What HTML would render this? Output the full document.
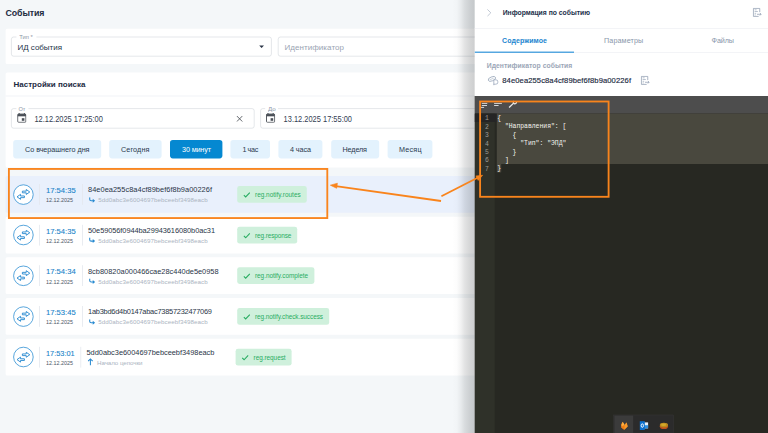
<!DOCTYPE html>
<html lang="ru">
<head>
<meta charset="utf-8">
<title>События</title>
<style>
html,body{margin:0;padding:0;}
body{width:768px;height:433px;overflow:hidden;background:#f4f7f9;font-family:"Liberation Sans",sans-serif;}
#s{position:absolute;left:0;top:0;width:1920px;height:1083px;transform:scale(0.4);transform-origin:0 0;background:#f4f7f9;overflow:hidden;color:#1d2b3f;}
#s *{box-sizing:border-box;}
.a{position:absolute;}
.t{position:absolute;white-space:nowrap;line-height:1;}
.b{font-weight:bold;}
.card{position:absolute;background:#fff;border-radius:4px;}
.fld{position:absolute;border:1.5px solid #bcc2cb;border-radius:6px;background:#fff;}
.gap{position:absolute;top:-3px;height:6px;background:#fff;}
.btn{position:absolute;top:350px;height:46px;border-radius:7px;background:#e3f2fd;}
.btn.on{background:#0588d1;}
.row{position:absolute;left:14px;width:1200px;height:92px;background:#fff;border-radius:4px;}
.row.sel{background:#e9f0fc;}
.circ{position:absolute;left:18.5px;top:20.5px;width:51px;height:51px;border-radius:50%;border:2px solid #2e8fd3;background:#fff;}
.vd{position:absolute;top:20px;width:1.5px;height:52px;background:#e4e8ee;}
.bdg{position:absolute;top:25px;height:42px;border-radius:6px;background:#cff0dc;}
pre{margin:0;font-family:"Liberation Mono",monospace;}
</style>
</head>
<body>
<div id="s">

<div class="t b" style="left:13.75px;top:21.38px;font-size:22px;color:#1d2b3f;letter-spacing:-0.224px;">События</div>
<div class="card" style="left:14px;top:71.5px;width:1200px;height:88.5px;"></div>
<div class="fld" style="left:28px;top:91.5px;width:651px;height:49px;"><div class="gap" style="left:12px;width:50px;"></div><div class="a" style="left:619px;top:21.5px;width:0;height:0;border-left:6.5px solid transparent;border-right:6.5px solid transparent;border-top:6.5px solid #2a3547;"></div></div>
<div class="t" style="left:47.50px;top:83.88px;font-size:15.5px;color:#8b95a5;transform:scaleX(0.9326);transform-origin:0 0;">Тип *</div>
<div class="t" style="left:43.75px;top:107.32px;font-size:20px;color:#26344a;letter-spacing:-0.064px;">ИД события</div>
<div class="fld" style="left:695px;top:91.5px;width:520px;height:49px;"></div>
<div class="t" style="left:711.25px;top:107.32px;font-size:20px;color:#9aa4b3;letter-spacing:0.126px;">Идентификатор</div>
<div class="card" style="left:14px;top:181px;width:1200px;height:238px;"></div>
<div class="t b" style="left:33.75px;top:200.57px;font-size:20px;color:#1d2b3f;letter-spacing:0.005px;">Настройки поиска</div>
<div class="a" style="left:14px;top:239px;width:1200px;height:1.5px;background:#eef1f4;"></div>
<div class="fld" style="left:28px;top:271px;width:608px;height:50px;"><div class="gap" style="left:12px;width:30px;"></div></div>
<svg class="a" style="left:42.5px;top:282px;" width="23" height="25" viewBox="0 0 23 25"><path d="M5 0.5v3M18 0.5v3" stroke="#4a4f57" stroke-width="2.4" fill="none"/><rect x="1.2" y="3.2" width="20.6" height="20.6" rx="2.4" fill="none" stroke="#4a4f57" stroke-width="2.4"/><rect x="1.2" y="3.2" width="20.6" height="5.6" fill="#4a4f57"/><rect x="11.5" y="13.5" width="6.5" height="6.5" fill="#4a4f57"/></svg>
<div class="t" style="left:46.25px;top:264.38px;font-size:15.5px;color:#8b95a5;transform:scaleX(0.9135);transform-origin:0 0;">От</div>
<div class="t" style="left:86.25px;top:286.65px;font-size:20.5px;color:#334053;transform:scaleX(0.9105);transform-origin:0 0;">12.12.2025 17:25:00</div>
<svg class="a" style="left:591px;top:289px;" width="16" height="16" viewBox="0 0 16 16"><path d="M1 1L15 15M15 1L1 15" stroke="#474c54" stroke-width="2.1" fill="none"/></svg>
<div class="fld" style="left:651px;top:271px;width:565px;height:50px;"><div class="gap" style="left:11px;width:32px;"></div></div>
<svg class="a" style="left:664.5px;top:282px;" width="23" height="25" viewBox="0 0 23 25"><path d="M5 0.5v3M18 0.5v3" stroke="#4a4f57" stroke-width="2.4" fill="none"/><rect x="1.2" y="3.2" width="20.6" height="20.6" rx="2.4" fill="none" stroke="#4a4f57" stroke-width="2.4"/><rect x="1.2" y="3.2" width="20.6" height="5.6" fill="#4a4f57"/><rect x="11.5" y="13.5" width="6.5" height="6.5" fill="#4a4f57"/></svg>
<div class="t" style="left:669.50px;top:264.38px;font-size:15.5px;color:#8b95a5;transform:scaleX(0.9976);transform-origin:0 0;">До</div>
<div class="t" style="left:709.00px;top:286.65px;font-size:20.5px;color:#334053;transform:scaleX(0.9091);transform-origin:0 0;">13.12.2025 17:55:00</div>
<div class="btn" style="left:32.5px;width:220px;"></div>
<div class="t" style="left:62.50px;top:365.26px;font-size:18px;color:#2a394e;letter-spacing:-0.044px;">Со вчерашнего дня</div>
<div class="btn" style="left:272.5px;width:131.25px;"></div>
<div class="t" style="left:302.50px;top:365.26px;font-size:18px;color:#2a394e;letter-spacing:0.375px;">Сегодня</div>
<div class="btn on" style="left:425px;width:131.25px;"></div>
<div class="t" style="left:455.00px;top:365.26px;font-size:18px;color:#fff;letter-spacing:-0.306px;">30 минут</div>
<div class="btn" style="left:576.25px;width:98.75px;"></div>
<div class="t" style="left:606.50px;top:365.26px;font-size:18px;color:#2a394e;word-spacing:-1.5px;letter-spacing:-0.602px;">1 час</div>
<div class="btn" style="left:696.25px;width:110px;"></div>
<div class="t" style="left:725.00px;top:365.26px;font-size:18px;color:#2a394e;letter-spacing:-0.184px;">4 часа</div>
<div class="btn" style="left:827.5px;width:120px;"></div>
<div class="t" style="left:856.25px;top:365.26px;font-size:18px;color:#2a394e;letter-spacing:-0.306px;">Неделя</div>
<div class="btn" style="left:968.75px;width:112.5px;"></div>
<div class="t" style="left:997.50px;top:365.26px;font-size:18px;color:#2a394e;letter-spacing:0.496px;">Месяц</div>
<div class="row sel" style="top:440px;">
<div class="circ"></div><svg class="a" style="left:0;top:0;" width="92" height="92" viewBox="0 0 92 92" fill="none" stroke="#2789d0" stroke-width="2.3" stroke-linejoin="round"><path d="M41.97 37.86L51.65 37.86L51.65 33.79L60.45 39.95L51.65 46.11L51.65 42.04L41.97 42.04Z"/><path d="M47.03 49.96L37.35 49.96L37.35 45.89L28.55 52.05L37.35 58.21L37.35 54.14L47.03 54.14Z"/></svg>
<div class="vd" style="left:84px;"></div>
<div class="t" style="left:101.00px;top:25.57px;font-size:20px;color:#1782c9;transform:scaleX(0.9536);transform-origin:0 0;-webkit-text-stroke:.25px #1782c9;">17:54:35</div>
<div class="t" style="left:101.00px;top:52.92px;font-size:15.6px;color:#4d5766;transform:scaleX(0.8649);transform-origin:0 0;">12.12.2025</div>
<div class="vd" style="left:191.25px;"></div>
<div class="t" style="left:206.00px;top:25.21px;font-size:18.5px;color:#2a3648;letter-spacing:0.110px;">84e0ea255c8a4cf89bef6f8b9a00226f</div>
<svg class="a" style="left:208px;top:52.5px;" width="17" height="15" viewBox="0 0 17 15" fill="none" stroke="#2789d0" stroke-width="2.7"><path d="M2.3 0v5.200q0 3.600 3.600 3.600h5" /><path d="M9.800 3.800l6 5-6 5z" fill="#2789d0" stroke="none"/></svg>
<div class="t" style="left:231.75px;top:52.75px;font-size:15.5px;color:#abb4c1;letter-spacing:0.147px;">5dd0abc3e6004697bebceebf3498eacb</div>
<div class="bdg" style="left:578.5px;width:174.25px;"><svg class="a" style="left:15px;top:14px;" width="18" height="16" viewBox="0 0 18 16" fill="none" stroke="#29ad62" stroke-width="2.800"><path d="M1.5 8.7l4.7 4.7L16.5 2.5"/></svg></div>
<div class="t" style="left:623.50px;top:39.46px;font-size:16px;color:#29ad62;letter-spacing:0.044px;">reg.notify.routes</div>
</div>
<div class="row" style="top:541.7px;">
<div class="circ"></div><svg class="a" style="left:0;top:0;" width="92" height="92" viewBox="0 0 92 92" fill="none" stroke="#2789d0" stroke-width="2.3" stroke-linejoin="round"><path d="M41.97 37.86L51.65 37.86L51.65 33.79L60.45 39.95L51.65 46.11L51.65 42.04L41.97 42.04Z"/><path d="M47.03 49.96L37.35 49.96L37.35 45.89L28.55 52.05L37.35 58.21L37.35 54.14L47.03 54.14Z"/></svg>
<div class="vd" style="left:84px;"></div>
<div class="t" style="left:101.00px;top:25.57px;font-size:20px;color:#1782c9;transform:scaleX(0.9536);transform-origin:0 0;-webkit-text-stroke:.25px #1782c9;">17:54:35</div>
<div class="t" style="left:101.00px;top:52.92px;font-size:15.6px;color:#4d5766;transform:scaleX(0.8649);transform-origin:0 0;">12.12.2025</div>
<div class="vd" style="left:191.25px;"></div>
<div class="t" style="left:206.00px;top:25.21px;font-size:18.5px;color:#2a3648;letter-spacing:-0.179px;">50e59056f0944ba29943616080b0ac31</div>
<svg class="a" style="left:208px;top:52.5px;" width="17" height="15" viewBox="0 0 17 15" fill="none" stroke="#2789d0" stroke-width="2.7"><path d="M2.3 0v5.200q0 3.600 3.600 3.600h5" /><path d="M9.800 3.800l6 5-6 5z" fill="#2789d0" stroke="none"/></svg>
<div class="t" style="left:231.75px;top:52.75px;font-size:15.5px;color:#abb4c1;letter-spacing:0.147px;">5dd0abc3e6004697bebceebf3498eacb</div>
<div class="bdg" style="left:578.5px;width:150px;"><svg class="a" style="left:15px;top:14px;" width="18" height="16" viewBox="0 0 18 16" fill="none" stroke="#29ad62" stroke-width="2.800"><path d="M1.5 8.7l4.7 4.7L16.5 2.5"/></svg></div>
<div class="t" style="left:623.50px;top:39.46px;font-size:16px;color:#29ad62;letter-spacing:-0.240px;">reg.response</div>
</div>
<div class="row" style="top:643.4px;">
<div class="circ"></div><svg class="a" style="left:0;top:0;" width="92" height="92" viewBox="0 0 92 92" fill="none" stroke="#2789d0" stroke-width="2.3" stroke-linejoin="round"><path d="M41.97 37.86L51.65 37.86L51.65 33.79L60.45 39.95L51.65 46.11L51.65 42.04L41.97 42.04Z"/><path d="M47.03 49.96L37.35 49.96L37.35 45.89L28.55 52.05L37.35 58.21L37.35 54.14L47.03 54.14Z"/></svg>
<div class="vd" style="left:84px;"></div>
<div class="t" style="left:101.00px;top:25.57px;font-size:20px;color:#1782c9;transform:scaleX(0.9536);transform-origin:0 0;-webkit-text-stroke:.25px #1782c9;">17:54:34</div>
<div class="t" style="left:101.00px;top:52.92px;font-size:15.6px;color:#4d5766;transform:scaleX(0.8649);transform-origin:0 0;">12.12.2025</div>
<div class="vd" style="left:191.25px;"></div>
<div class="t" style="left:206.00px;top:25.21px;font-size:18.5px;color:#2a3648;letter-spacing:0.012px;">8cb80820a000466cae28c440de5e0958</div>
<svg class="a" style="left:208px;top:52.5px;" width="17" height="15" viewBox="0 0 17 15" fill="none" stroke="#2789d0" stroke-width="2.7"><path d="M2.3 0v5.200q0 3.600 3.600 3.600h5" /><path d="M9.800 3.800l6 5-6 5z" fill="#2789d0" stroke="none"/></svg>
<div class="t" style="left:231.75px;top:52.75px;font-size:15.5px;color:#abb4c1;letter-spacing:0.147px;">5dd0abc3e6004697bebceebf3498eacb</div>
<div class="bdg" style="left:578.5px;width:193.5px;"><svg class="a" style="left:15px;top:14px;" width="18" height="16" viewBox="0 0 18 16" fill="none" stroke="#29ad62" stroke-width="2.800"><path d="M1.5 8.7l4.7 4.7L16.5 2.5"/></svg></div>
<div class="t" style="left:623.50px;top:39.46px;font-size:16px;color:#29ad62;letter-spacing:-0.083px;">reg.notify.complete</div>
</div>
<div class="row" style="top:745.1px;">
<div class="circ"></div><svg class="a" style="left:0;top:0;" width="92" height="92" viewBox="0 0 92 92" fill="none" stroke="#2789d0" stroke-width="2.3" stroke-linejoin="round"><path d="M41.97 37.86L51.65 37.86L51.65 33.79L60.45 39.95L51.65 46.11L51.65 42.04L41.97 42.04Z"/><path d="M47.03 49.96L37.35 49.96L37.35 45.89L28.55 52.05L37.35 58.21L37.35 54.14L47.03 54.14Z"/></svg>
<div class="vd" style="left:84px;"></div>
<div class="t" style="left:101.00px;top:25.57px;font-size:20px;color:#1782c9;transform:scaleX(0.9536);transform-origin:0 0;-webkit-text-stroke:.25px #1782c9;">17:53:45</div>
<div class="t" style="left:101.00px;top:52.92px;font-size:15.6px;color:#4d5766;transform:scaleX(0.8649);transform-origin:0 0;">12.12.2025</div>
<div class="vd" style="left:191.25px;"></div>
<div class="t" style="left:206.00px;top:25.21px;font-size:18.5px;color:#2a3648;letter-spacing:-0.588px;">1ab3bd6d4b0147abac73857232477069</div>
<svg class="a" style="left:208px;top:52.5px;" width="17" height="15" viewBox="0 0 17 15" fill="none" stroke="#2789d0" stroke-width="2.7"><path d="M2.3 0v5.200q0 3.600 3.600 3.600h5" /><path d="M9.800 3.800l6 5-6 5z" fill="#2789d0" stroke="none"/></svg>
<div class="t" style="left:231.75px;top:52.75px;font-size:15.5px;color:#abb4c1;letter-spacing:0.147px;">5dd0abc3e6004697bebceebf3498eacb</div>
<div class="bdg" style="left:578.5px;width:230.75px;"><svg class="a" style="left:15px;top:14px;" width="18" height="16" viewBox="0 0 18 16" fill="none" stroke="#29ad62" stroke-width="2.800"><path d="M1.5 8.7l4.7 4.7L16.5 2.5"/></svg></div>
<div class="t" style="left:623.50px;top:39.46px;font-size:16px;color:#29ad62;letter-spacing:-0.135px;">reg.notify.check.success</div>
</div>
<div class="row" style="top:846.8px;">
<div class="circ"></div><svg class="a" style="left:0;top:0;" width="92" height="92" viewBox="0 0 92 92" fill="none" stroke="#2789d0" stroke-width="2.3" stroke-linejoin="round"><path d="M41.97 37.86L51.65 37.86L51.65 33.79L60.45 39.95L51.65 46.11L51.65 42.04L41.97 42.04Z"/><path d="M47.03 49.96L37.35 49.96L37.35 45.89L28.55 52.05L37.35 58.21L37.35 54.14L47.03 54.14Z"/></svg>
<div class="vd" style="left:84px;"></div>
<div class="t" style="left:101.00px;top:25.57px;font-size:20px;color:#1782c9;transform:scaleX(0.9183);transform-origin:0 0;-webkit-text-stroke:.25px #1782c9;">17:53:01</div>
<div class="t" style="left:101.00px;top:52.92px;font-size:15.6px;color:#4d5766;transform:scaleX(0.8649);transform-origin:0 0;">12.12.2025</div>
<div class="vd" style="left:187.25px;"></div>
<div class="t" style="left:202.25px;top:25.21px;font-size:18.5px;color:#2a3648;letter-spacing:-0.040px;">5dd0abc3e6004697bebceebf3498eacb</div>
<svg class="a" style="left:205px;top:48px;" width="14" height="19" viewBox="0 0 14 19" fill="none" stroke="#2789d0" stroke-width="2.600"><path d="M7 18.500V2.500M1.300 8L7 2.300l5.700 5.700"/></svg>
<div class="t" style="left:228.50px;top:52.75px;font-size:15.5px;color:#abb4c1;letter-spacing:-0.160px;">Начало цепочки</div>
<div class="bdg" style="left:574.75px;width:140.25px;"><svg class="a" style="left:15px;top:14px;" width="18" height="16" viewBox="0 0 18 16" fill="none" stroke="#29ad62" stroke-width="2.800"><path d="M1.5 8.7l4.7 4.7L16.5 2.5"/></svg></div>
<div class="t" style="left:620.00px;top:39.46px;font-size:16px;color:#29ad62;letter-spacing:-0.094px;">reg.request</div>
</div>
<div class="a" style="left:1127px;top:0;width:60px;height:1083px;background:linear-gradient(90deg,rgba(25,30,34,0) 4%,rgba(25,30,34,.012) 25%,rgba(25,30,34,.06) 42%,rgba(25,30,34,.125) 58%,rgba(25,30,34,.18) 79%,rgba(25,30,34,.22) 100%);"></div>
<div class="a" style="left:1187px;top:0;width:733px;height:1083px;background:#fff;">
<svg class="a" style="left:30px;top:22px;" width="12" height="20" viewBox="0 0 12 20" fill="none" stroke="#a9b4c3" stroke-width="1.8"><path d="M1.5 1.5L10 10L1.5 18.5"/></svg>
<div class="t b" style="left:69.75px;top:24.36px;font-size:17px;color:#22304a;letter-spacing:-0.016px;">Информация по событию</div>
<svg class="a" style="left:693.75px;top:19px;" width="24" height="25" viewBox="0 0 24 25" fill="none" stroke="#8a98ad" stroke-width="1.800"><path d="M18.400 11V2H2.500v20H15.600"/><path d="M5.500 5.600h5M5.500 9.800h8.100M5.500 14.300h3.900M5.500 18.300h3" stroke-width="1.500"/><path d="M11.500 16.700h10M18.700 13.500l3.200 3.200-3.200 3.200"/></svg>
<div class="a" style="left:0;top:70px;width:733px;height:1.5px;background:#f0f2f5;"></div>
<div class="t b" style="left:68.00px;top:92.69px;font-size:17.5px;color:#1b85cf;letter-spacing:0.200px;">Содержимое</div>
<div class="t" style="left:323.00px;top:91.76px;font-size:18px;color:#8996aa;letter-spacing:0.256px;">Параметры</div>
<div class="t" style="left:591.75px;top:91.76px;font-size:18px;color:#8996aa;letter-spacing:-0.238px;">Файлы</div>
<div class="a" style="left:0;top:130px;width:733px;height:1.5px;background:#f0f2f5;"></div>
<div class="a" style="left:0;top:128.5px;width:248px;height:3.8px;background:#3095da;"></div>
<div class="t b" style="left:29.75px;top:157.36px;font-size:17px;color:#9ba6b7;letter-spacing:0.102px;">Идентификатор события</div>
<svg class="a" style="left:32px;top:189px;" width="28" height="26" viewBox="0 0 28 26" fill="none" stroke="#94a2b6" stroke-width="1.800"><ellipse cx="10.750" cy="8.250" rx="9.800" ry="5" transform="rotate(-22 10.750 8.250)"/><path d="M5 10.500l10-4" stroke-width="1.200"/><path d="M15.500 10.500h5a5.500 5.500 0 0 1 0 11h-5zM15.500 21v3" fill="#fff"/></svg>
<div class="t" style="left:68.75px;top:191.42px;font-size:19px;color:#1d2b3f;letter-spacing:0.222px;-webkit-text-stroke:.4px #1d2b3f;">84e0ea255c8a4cf89bef6f8b9a00226f</div>
<svg class="a" style="left:414px;top:188.5px;" width="24" height="25" viewBox="0 0 24 25" fill="none" stroke="#8a98ad" stroke-width="1.800"><path d="M18.400 11V2H2.500v20H15.600"/><path d="M5.500 5.600h5M5.500 9.800h8.100M5.500 14.300h3.900M5.500 18.300h3" stroke-width="1.500"/><path d="M11.500 16.700h10M18.700 13.500l3.200 3.200-3.200 3.200"/></svg>
<div class="a" style="left:0;top:240px;width:733px;height:843px;background:#272822;"></div>
<div class="a" style="left:0;top:240px;width:733px;height:44px;background:#4d4d4d;"></div>
<svg class="a" style="left:10px;top:248px;" width="110" height="32" viewBox="0 0 110 32" fill="none" stroke="#ececec" stroke-width="2.2"><path d="M7.5 10.500H21.250M7.5 15.750H20.500M4.5 20.500H13.250"/><path d="M38.250 10.500H57.750M38.250 15.750H49.500"/><path d="M75.750 21L87 9.800" stroke-width="3.400"/><path d="M93.600 5.400A4 4 0 1 1 87.960 4.320" stroke-width="3"/></svg>
<div class="a" style="left:0;top:284px;width:49.5px;height:799px;background:#2f3129;"></div>
<div class="a" style="left:0;top:284px;width:55px;height:21px;background:#252525;"></div>
<div class="a" style="left:55px;top:284px;width:678px;height:126px;background:#49483e;"></div>
<div class="a" style="left:55px;top:410px;width:10.5px;height:21px;background:#49483e;"></div>
<pre class="a" style="left:0;top:286.5px;width:35px;text-align:right;font-size:16px;line-height:21px;color:#9b9c96;">1
2
3
4
5
6
7</pre>
<pre class="a" style="left:56px;top:286px;font-size:16px;line-height:21px;color:#f4f4ee;">{
  "Направления": [
    {
      "Тип": "ЭПД"
    }
  ]
}</pre>
<div class="a" style="left:347px;top:1037px;width:150px;height:46px;background:#2b2b2b;border:1px solid #3a3a3a;"></div>
<div class="a" style="left:349px;top:1039px;width:47px;height:44px;background:#3b3b3b;"></div>
<svg class="a" style="left:347px;top:1037px;" width="150" height="46" viewBox="0 0 60 18.400"><g transform="translate(10.700 10.900)"><path d="M-3.300 -1.200L-1.600 -4L.2 -.8L2.300 -3.300L3.300 .8L-.1 4L-3 1.800Z" fill="#f58a1f"/><path d="M-1.600 -4L.2 -.8L-2.600 .2Z" fill="#fbb348"/><path d="M.2 -.8L2.300 -3.300L3.300 .8L-.1 4Z" fill="#f79a2b"/><path d="M-3 1.800L-.1 4L.2 -.8Z" fill="#ee7d14"/></g><g transform="translate(30.400 10.800)"><rect x="-.2" y="-3.200" width="4.300" height="6" fill="#e8f1fa"/><rect x="-.2" y="-.4" width="4.300" height="3.200" fill="#2f8fe0"/><rect x="-4.200" y="-4.400" width="5" height="8.800" fill="#0b6fcc"/><ellipse cx="-1.700" cy="0" rx="1.150" ry="1.750" fill="none" stroke="#fff" stroke-width=".95"/></g><g transform="translate(50.300 10.900)"><ellipse cx="0" cy=".5" rx="4.100" ry="2.900" fill="#c2511b"/><ellipse cx="0" cy="-.6" rx="4.100" ry="2.400" fill="#b98a1f"/><ellipse cx="-.3" cy="-.9" rx="2.600" ry="1.300" fill="#d4a82a"/></g></svg>
</div>
<svg class="a" style="left:0;top:0;" width="1920" height="1083" viewBox="0 0 768 433.200" fill="none" stroke="#f9841c" stroke-width="1.850"><rect x="8.900" y="168.950" width="318.400" height="49.100"/><rect x="480.100" y="101.500" width="128.500" height="95.300"/><path d="M441 201L334 185.800"/><path d="M330.300 185.200L337.400 183.200L336.700 188.300Z" fill="#f9841c" stroke-width=".6"/><path d="M441.400 196.300L479.500 176.800"/><path d="M482.600 175.300L478.200 180.400L475.900 175.900Z" fill="#f9841c" stroke-width=".6"/></svg>

</div>
</body>
</html>
